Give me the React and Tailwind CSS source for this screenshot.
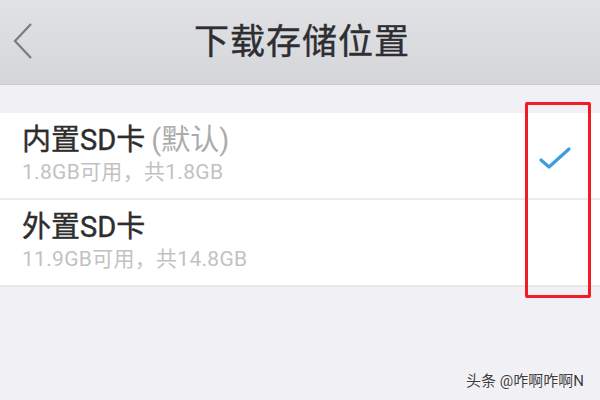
const font = { fontFamily: '"Roboto", "Noto Sans CJK SC", sans-serif' };

const storages = [
  ['内置SD卡', '(默认)', '1.8GB可用，共1.8GB', true],
  ['外置SD卡', null, '11.9GB可用，共14.8GB', false],
];

function App() {
  return (
    <div className="relative h-[400px] w-[600px] overflow-hidden bg-[#f1f1f5]" style={font}>
      <header className="relative flex h-[85px] items-center justify-center border-b border-[#c9cacf] bg-gradient-to-b from-[#e1e2e6] to-[#d5d6da]">
        <svg className="absolute left-[12px] top-[22px]" width="22" height="38" viewBox="0 0 22 38" fill="none">
          <path d="M19 2 L3 19 L19 36" stroke="#7b7b7e" strokeWidth="2.2" />
        </svg>
        <h1 className="pl-[4px] text-[35px] leading-none tracking-[1px] text-[#2e2e31] [-webkit-text-stroke:0.4px_#2e2e31]">下载存储位置</h1>
      </header>

      <div className="mt-[28px] bg-white">
        {storages.map(([title, tag, sub, checked], i) => (
          <div key={title} className={`flex h-[87px] items-start justify-between pl-[22px] pr-[28px] pt-[10px] ${i === 0 ? 'border-b-2 border-[#ececef]' : 'border-b-2 border-[#e7e8eb]'}`}>
            <div className="flex flex-col">
              <p className="text-[29px] leading-[34px] text-[#2d2d2d] [-webkit-text-stroke:0.4px_#2d2d2d]">
                {title}
                {tag && <span className="ml-[6px] text-[#ababab] [-webkit-text-stroke:0px]">{tag}</span>}
              </p>
              <p className="mt-[2px] text-[21px] leading-[26px] tracking-[0.3px] text-[#c2c2c2]">{sub}</p>
            </div>
            {checked && (
              <svg className="mt-[22px]" width="34" height="28" viewBox="0 0 34 28" fill="none">
                <path d="M3 15 L11 22 L31 4" stroke="#3c9de0" strokeWidth="3.2" strokeLinecap="round" strokeLinejoin="round" />
              </svg>
            )}
          </div>
        ))}
      </div>

      <div className="absolute left-[525px] top-[102px] h-[196px] w-[66px] rounded-[2px] border-[3px] border-[#f11c24]" />

      <p className="absolute left-[466px] top-[370px] text-[15px] text-[#3d3d3d] [text-shadow:0_0_2px_#fff]">头条 @咋啊咋啊N</p>
    </div>
  );
}

export default App;
